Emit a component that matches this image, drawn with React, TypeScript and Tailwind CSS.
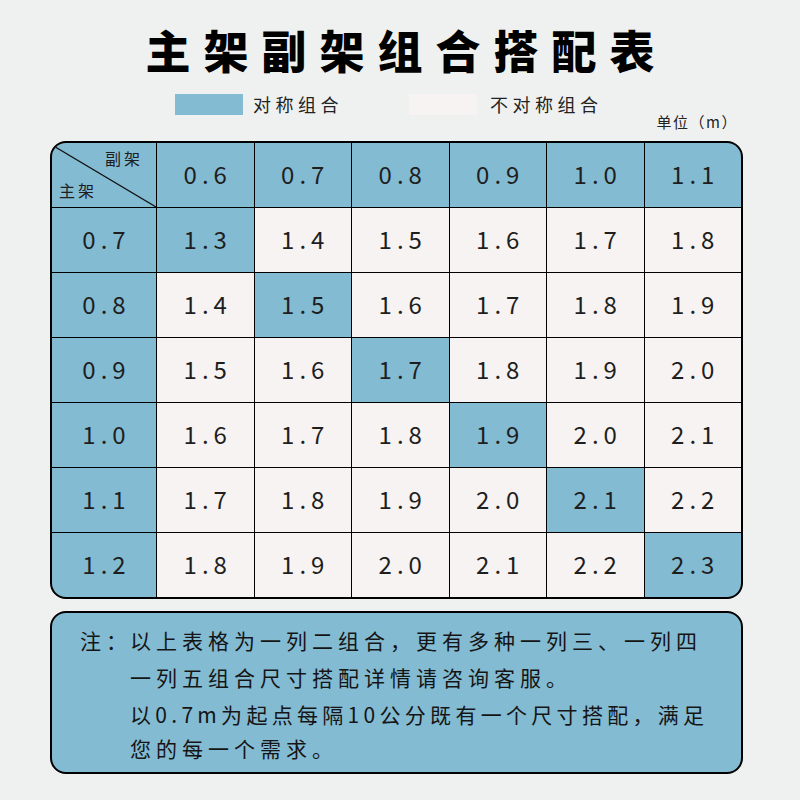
const SUB = ['0.6', '0.7', '0.8', '0.9', '1.0', '1.1']
const MAIN = ['0.7', '0.8', '0.9', '1.0', '1.1', '1.2']

const font = { fontFamily: '"Noto Sans CJK SC", "Noto Sans", sans-serif' }

function Cell({ value, blue }: { value: string; blue?: boolean }) {
  return (
    <div
      className={`h-[64px] flex items-center justify-center pl-[5px] pb-[3px] text-[24px] tracking-[5px] text-[#1e1e1e] ${
        blue ? 'bg-[#83bbd3]' : 'bg-[#f6f3f2]'
      }`}
    >
      {value}
    </div>
  )
}

export default function App() {
  return (
    <div className="w-[800px] h-[800px] bg-[#eff1f0] flex flex-col" style={font}>
      {/* Title */}
      <h1 className="mt-[22px] h-[56px] text-center pl-[13px] text-[45px] leading-[56px] font-black tracking-[13px] text-black">
        主架副架组合搭配表
      </h1>

      {/* Legend */}
      <div className="mt-[16px] ml-[175px] flex items-center h-[21px]">
        <div className="w-[68px] h-[21px] bg-[#83bbd3]" />
        <span className="ml-[10px] text-[18px] tracking-[4.5px] text-[#222]">对称组合</span>
        <div className="ml-[66px] w-[68px] h-[21px] bg-[#f6f3f2]" />
        <span className="ml-[13px] text-[18px] tracking-[4.5px] text-[#222]">不对称组合</span>
      </div>
      <div className="h-[20px] -mt-[3px] mb-[3px] flex justify-end pr-[62px] text-[15px] leading-[20px] tracking-[1.5px] text-[#222]">
        单位（m）
      </div>

      {/* Table */}
      <div className="mt-[6px] ml-[50px] mr-[57px] border-2 border-black rounded-[16px] overflow-hidden bg-black grid grid-cols-[104px_repeat(6,1fr)] gap-px">
        <div className="relative h-[64px] bg-[#83bbd3]">
          <svg className="absolute inset-0" width="104" height="64" viewBox="0 0 104 64">
            <line x1="0" y1="2" x2="104" y2="64" stroke="#111" strokeWidth="1.2" />
          </svg>
          <span className="absolute right-[13px] top-[3px] text-[16px] tracking-[3px] text-[#1e1e1e]">副架</span>
          <span className="absolute left-[7px] bottom-[5px] text-[16px] tracking-[3px] text-[#1e1e1e]">主架</span>
        </div>
        {SUB.map((s) => (
          <Cell key={s} value={s} blue />
        ))}
        {MAIN.map((m, r) => [
          <Cell key={`m${m}`} value={m} blue />,
          ...SUB.map((s, c) => (
            <Cell
              key={`${m}-${s}`}
              value={(parseFloat(m) + parseFloat(s)).toFixed(1)}
              blue={r === c}
            />
          )),
        ])}
      </div>

      {/* Note */}
      <div className="mt-[12px] ml-[50px] mr-[57px] h-[163px] border-2 border-black rounded-[16px] bg-[#83bbd3] pt-[9px] pl-[28px] flex text-[21px] leading-[37px] tracking-[5px] text-[#151515]">
        <span className="w-[50px] shrink-0">注：</span>
        <div className="flex flex-col">
          <span>以上表格为一列二组合，更有多种一列三、一列四</span>
          <span>一列五组合尺寸搭配详情请咨询客服。</span>
          <span className="tracking-[4.3px]">以0.7m为起点每隔10公分既有一个尺寸搭配，满足</span>
          <span className="-mt-[3px]">您的每一个需求。</span>
        </div>
      </div>
    </div>
  )
}
